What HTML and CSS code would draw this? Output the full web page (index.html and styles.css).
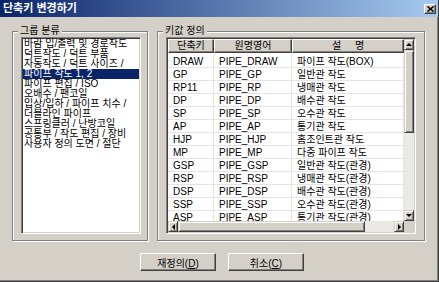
FILE: index.html
```html
<!DOCTYPE html>
<html lang="ko">
<head>
    <meta charset="UTF-8">
    <title>단축키 변경하기</title>
    <link rel="stylesheet" href="styles.css">
</head>
<body>
    <div class="window">
        <div class="titlebar">
            <span class="title">단축키 변경하기</span>
            <button class="close">
                <svg width="7" height="6" viewBox="0 0 7 6"><path d="M0.5 0.5 L6.5 5.5 M6.5 0.5 L0.5 5.5" stroke="#000" stroke-width="1.6" fill="none"/></svg>
            </button>
        </div>

        <div class="main">
            <div class="groups">
                <fieldset class="group group-left">
                    <legend>그룹 분류</legend>
                    <div class="listbox">
                        <div class="item">바람 입/출력 및 경로작도</div>
                        <div class="item">덕트작도 / 덕트 부품</div>
                        <div class="item">자동작도 / 덕트 사이즈 /</div>
                        <div class="item selected">파이프 작도 1, 2</div>
                        <div class="item">파이프 편집 / ISO</div>
                        <div class="item">오배수 / 팬코일</div>
                        <div class="item">입상/입하 / 파이프 치수 /</div>
                        <div class="item">더블라인 파이프</div>
                        <div class="item">스프링클러 / 난방코일</div>
                        <div class="item">공통부 / 작도 편집 / 장비</div>
                        <div class="item">사용자 정의 도면 / 절단</div>
                    </div>
                </fieldset>

                <fieldset class="group group-right">
                    <legend>키값 정의</legend>
                    <div class="listview">
                        <div class="lv-body">
                            <div class="lv-head">
                                <div class="hcell">단축키</div>
                                <div class="hcell">원명영어</div>
                                <div class="hcell spaced">설 명</div>
                            </div>
                            <div class="lv-rows">
                                <div class="lv-row"><div class="cell">DRAW</div><div class="cell">PIPE_DRAW</div><div class="cell">파이프 작도(BOX)</div></div>
                                <div class="lv-row"><div class="cell">GP</div><div class="cell">PIPE_GP</div><div class="cell">일반관 작도</div></div>
                                <div class="lv-row"><div class="cell">RP11</div><div class="cell">PIPE_RP</div><div class="cell">냉매관 작도</div></div>
                                <div class="lv-row"><div class="cell">DP</div><div class="cell">PIPE_DP</div><div class="cell">배수관 작도</div></div>
                                <div class="lv-row"><div class="cell">SP</div><div class="cell">PIPE_SP</div><div class="cell">오수관 작도</div></div>
                                <div class="lv-row"><div class="cell">AP</div><div class="cell">PIPE_AP</div><div class="cell">통기관 작도</div></div>
                                <div class="lv-row"><div class="cell">HJP</div><div class="cell">PIPE_HJP</div><div class="cell">홈조인트관 작도</div></div>
                                <div class="lv-row"><div class="cell">MP</div><div class="cell">PIPE_MP</div><div class="cell">다중 파이프 작도</div></div>
                                <div class="lv-row"><div class="cell">GSP</div><div class="cell">PIPE_GSP</div><div class="cell">일반관 작도(관경)</div></div>
                                <div class="lv-row"><div class="cell">RSP</div><div class="cell">PIPE_RSP</div><div class="cell">냉매관 작도(관경)</div></div>
                                <div class="lv-row"><div class="cell">DSP</div><div class="cell">PIPE_DSP</div><div class="cell">배수관 작도(관경)</div></div>
                                <div class="lv-row"><div class="cell">SSP</div><div class="cell">PIPE_SSP</div><div class="cell">오수관 작도(관경)</div></div>
                                <div class="lv-row"><div class="cell">ASP</div><div class="cell">PIPE_ASP</div><div class="cell">통기관 작도(관경)</div></div>
                            </div>
                        </div>
                        <div class="vscroll">
                            <div class="sbtn"><i class="arr arr-up"></i></div>
                            <div class="thumb vthumb"></div>
                            <div class="track"></div>
                            <div class="sbtn"><i class="arr arr-down"></i></div>
                        </div>
                        <div class="hscroll">
                            <div class="sbtn"><i class="arr arr-left"></i></div>
                            <div class="thumb hthumb"></div>
                            <div class="track"></div>
                            <div class="sbtn"><i class="arr arr-right"></i></div>
                        </div>
                        <div class="corner"></div>
                    </div>
                </fieldset>
            </div>

            <div class="buttons">
                <button class="btn">재정의(<u>D</u>)</button>
                <button class="btn">취소(<u>C</u>)</button>
            </div>
        </div>
    </div>
</body>
</html>
```

FILE: styles.css
```css
* {
    box-sizing: border-box;
}
body {
    margin: 0;
    font-family: "Liberation Sans", "Noto Sans CJK KR", sans-serif;
    font-size: 10px;
    color: #000;
}
.window {
    width: 439px;
    height: 282px;
    background-color: #d4d0c8;
    border-right: 1px solid #404040;
    border-bottom: 1px solid #404040;
    box-shadow: inset -1px -1px 0 #808080;
}
.titlebar {
    height: 17px;
    display: flex;
    align-items: center;
    justify-content: space-between;
    padding: 0 2px 0 3px;
    background: linear-gradient(to right, #0a246a, #a6caf0);
}
.title {
    color: white;
    font-weight: bold;
    font-size: 11px;
    line-height: 17px;
}
.close {
    width: 12px;
    height: 10px;
    padding: 0;
    display: flex;
    align-items: center;
    justify-content: center;
    background-color: #d4d0c8;
    border: 1px solid;
    border-color: #fff #404040 #404040 #fff;
    box-shadow: inset -1px -1px 0 #808080;
}
.main {
    padding: 8px 0 0 12px;
}
.groups {
    display: flex;
    gap: 9px;
}
.group {
    margin: 0;
    min-width: 0;
    padding: 0 6px 6px 8px;
    border: 1px solid #808080;
    box-shadow: 1px 1px 0 #fff, inset 1px 1px 0 #fff;
}
.group legend {
    padding: 0 2px;
    margin-left: -3px;
    line-height: 12px;
    font-size: 10px;
    background-color: #d4d0c8;
}
.group-left {
    width: 136px;
}
.group-right {
    width: 268px;
    padding-right: 8px;
}

/* sunken boxes */
.listbox, .listview {
    height: 197px;
    padding: 1px;
    background-color: white;
    border: 1px solid;
    border-color: #808080 #fff #fff #808080;
    box-shadow: inset 1px 1px 0 #404040, inset -1px -1px 0 #d4d0c8;
    overflow: hidden;
}
.item {
    height: 10px;
    line-height: 10px;
    padding-left: 1px;
    white-space: nowrap;
}
.item.selected {
    background-color: #0a246a;
    color: white;
}

.listview {
    display: grid;
    grid-template-columns: 236px 10px;
    grid-template-rows: 182px 11px;
}
.lv-body {
    overflow: hidden;
}
.lv-head, .lv-row {
    display: grid;
    grid-template-columns: 46px 78px 112px;
}
.lv-head {
    height: 14px;
}
.hcell {
    background-color: #d4d0c8;
    border: 1px solid;
    border-color: #fff #404040 #404040 #fff;
    box-shadow: inset -1px -1px 0 #808080;
    text-align: center;
    line-height: 12px;
    white-space: nowrap;
}
.hcell.spaced {
    word-spacing: 11px;
}
.lv-rows {
    padding-top: 2px;
}
.lv-row {
    height: 13px;
}
.cell {
    padding: 1px 0 0 5px;
    line-height: 11px;
    border-right: 1px solid #e4e4e4;
    border-bottom: 1px solid #e4e4e4;
    white-space: nowrap;
    overflow: hidden;
}

/* scrollbars */
.vscroll {
    display: flex;
    flex-direction: column;
}
.hscroll {
    display: flex;
}
.sbtn, .thumb {
    background-color: #d4d0c8;
    border: 1px solid;
    border-color: #d4d0c8 #404040 #404040 #d4d0c8;
    box-shadow: inset 1px 1px 0 #fff, inset -1px -1px 0 #808080;
}
.sbtn {
    flex: none;
    width: 10px;
    height: 11px;
    display: flex;
    align-items: center;
    justify-content: center;
}
.vthumb {
    height: 83px;
}
.hthumb {
    width: 187px;
}
.track {
    flex: 1;
    background-color: #ebe9e4;
}
.corner {
    background-color: #d4d0c8;
}
.arr {
    width: 0;
    height: 0;
}
.arr-up {
    border-left: 3px solid transparent;
    border-right: 3px solid transparent;
    border-bottom: 3px solid #000;
}
.arr-down {
    border-left: 3px solid transparent;
    border-right: 3px solid transparent;
    border-top: 3px solid #000;
}
.arr-left {
    border-top: 3px solid transparent;
    border-bottom: 3px solid transparent;
    border-right: 3px solid #000;
}
.arr-right {
    border-top: 3px solid transparent;
    border-bottom: 3px solid transparent;
    border-left: 3px solid #000;
}

.buttons {
    display: flex;
    gap: 12px;
    margin-top: 12px;
    padding-left: 128px;
}
.btn {
    width: 76px;
    height: 18px;
    padding: 0;
    font-family: inherit;
    font-size: 10px;
    color: #000;
    background-color: #d4d0c8;
    border: 1px solid;
    border-color: #fff #404040 #404040 #fff;
    box-shadow: inset -1px -1px 0 #808080;
}
```
